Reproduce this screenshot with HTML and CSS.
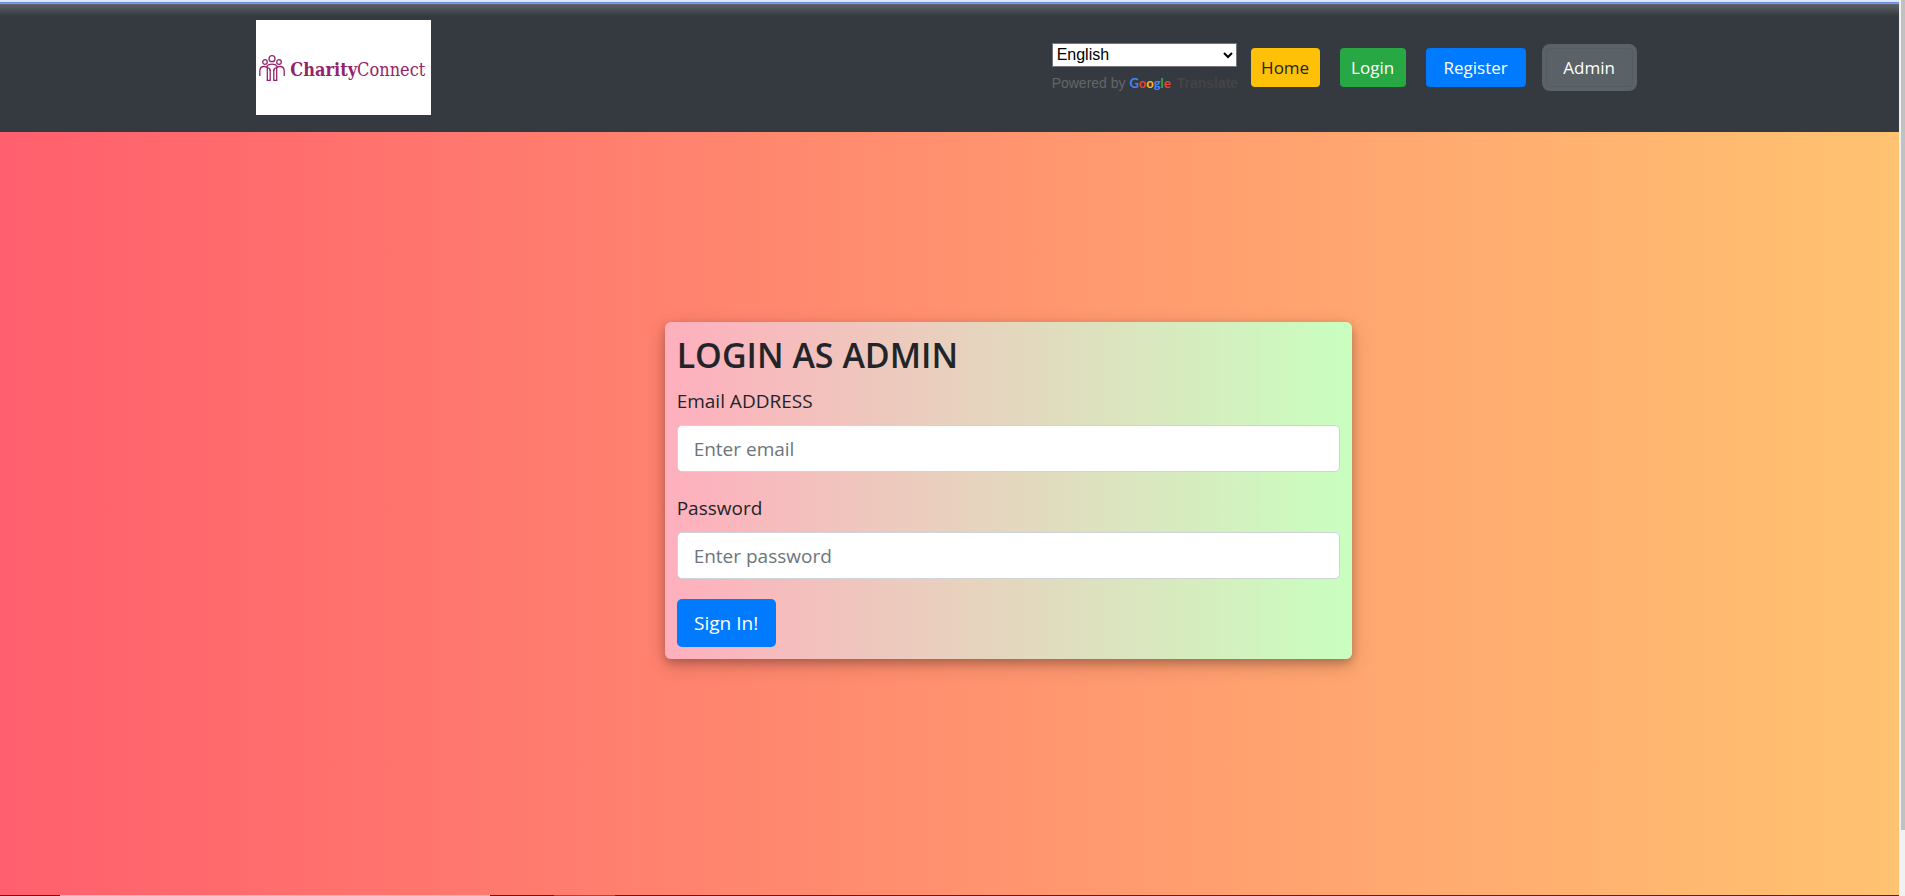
FILE: index.html
```html
<!DOCTYPE html>
<html lang="en">
<head>
<meta charset="utf-8">
<title>CharityConnect – Admin Login</title>
<link rel="stylesheet" href="styles.css">
</head>
<body>
<div class="page">
  <div class="top-strip"></div>
  <header class="navbar">
    <div class="container">
      <a class="brand" href="#">
        <svg class="brand-icon" width="26" height="26" viewBox="0 0 26 26" fill="none" stroke="#93246a" stroke-width="1.3" aria-hidden="true">
          <circle cx="13" cy="3.7" r="3"/>
          <circle cx="6" cy="7" r="2.3"/>
          <circle cx="20" cy="7" r="2.3"/>
          <path d="M.8 21V16Q.8 11.500 5 11.500Q7.500 11.500 8.300 13V25.300H11.200V14.500M25.200 21V16Q25.200 11.500 21 11.500Q18.500 11.500 17.700 13V25.300H14.800V14.500"/>
          <path d="M7.600 12Q9 9.200 13 9.200T18.400 12M8 13Q11.200 12.500 11.200 16M18 13Q14.800 12.500 14.800 16"/>
        </svg>
        <span class="brand-text"><b>Charity</b>Connect</span>
      </a>
      <nav class="actions">
        <div class="translate">
          <select class="language" aria-label="Language"><option>English</option></select>
          <div class="powered">Powered by <span class="google"><span class="g-blue">G</span><span class="g-red">o</span><span class="g-yellow">o</span><span class="g-blue">g</span><span class="g-green">l</span><span class="g-red">e</span></span> <b class="service">Translate</b></div>
        </div>
        <button class="btn btn-home" type="button">Home</button>
        <button class="btn btn-login" type="button">Login</button>
        <button class="btn btn-register" type="button">Register</button>
        <button class="btn btn-admin" type="button">Admin</button>
      </nav>
    </div>
  </header>
  <main class="main">
    <form class="card">
      <h2 class="title">LOGIN AS ADMIN</h2>
      <label class="label" for="email">Email ADDRESS</label>
      <input class="field" id="email" type="email" placeholder="Enter email">
      <label class="label" for="password">Password</label>
      <input class="field" id="password" type="password" placeholder="Enter password">
      <button class="submit" type="button">Sign In!</button>
    </form>
  </main>
  <div class="bottom-strip"></div>
</div>
<div class="scroll-track"><div class="scroll-thumb"></div></div>
</body>
</html>
```
FILE: styles.css
```css
* { box-sizing: border-box; }
body {
  margin: 0;
  display: flex;
  min-height: 100vh;
  font-family: "Open Sans", "Noto Sans", sans-serif;
  color: #212529;
}
.page {
  flex: 1;
  display: flex;
  flex-direction: column;
  background: linear-gradient(to right, #ff5f6d, #ffc371);
}
.top-strip {
  height: 4px;
  background: linear-gradient(#dfe8fb 2px, #6a8bdc 2px, #6a8bdc 3px, #c0908c 3px);
}
.navbar {
  background: linear-gradient(#5f6367, #343a40 12px);
  padding: 16px 0 17px;
}
.container {
  width: 73%;
  margin: 0 auto;
  display: flex;
  justify-content: space-between;
  align-items: center;
}
.brand {
  display: flex;
  align-items: center;
  gap: 5px;
  width: 175px;
  height: 95px;
  padding: 0 3px;
  background: #fff;
  color: #93246a;
  text-decoration: none;
}
.brand-icon { flex: none; }
.brand-text { padding-top: 4px; font: 18px/28px "DejaVu Serif Condensed", "DejaVu Serif", serif; }
.actions { display: flex; align-items: center; gap: 20px; padding-right: 10px; }
.translate { width: 199px; margin-right: -20px; padding-top: 2px; }
.language {
  display: block;
  width: 185px;
  height: 24px;
  border: 1px solid #767676;
  border-radius: 0;
  background: #fff;
  color: #000;
  font: 16px "Liberation Sans", sans-serif;
}
.powered {
  margin-top: 4px;
  color: #666;
  font: 14px/24px "Liberation Sans", sans-serif;
  white-space: nowrap;
}
.google { margin-right: 2px; font-family: Lato, sans-serif; font-size: 13px; font-weight: 700; }
.g-blue { color: #4285f4; }
.g-red { color: #ea4335; }
.g-yellow { color: #fbbc05; }
.g-green { color: #34a853; }
.service { color: #444; }
.btn {
  height: 39px;
  padding: 0 10px;
  border: 0;
  border-radius: 4px;
  color: #fff;
  font: 17px "Open Sans", sans-serif;
}
.btn-home { width: 69px; background: #ffc107; color: #212529; }
.btn-login { width: 66px; background: #28a745; }
.btn-register { width: 100px; background: #007bff; }
.btn-admin { width: 87px; background: #5a6268; border: 1px solid #545b62; box-shadow: 0 0 0 4px #5b6169; }
.main { flex: 1; padding: 190px 0 120px; }
.card {
  width: 687px;
  max-width: 90%;
  margin-left: 35%;
  padding: 12px;
  border-radius: 6px;
  background: linear-gradient(to right, #ffafbd, #c9ffbf);
  box-shadow: 0 4px 8px rgba(0, 0, 0, .2), 0 6px 20px rgba(0, 0, 0, .19);
}
.title { margin: 0 0 8px; font-size: 34px; line-height: 43px; font-weight: 600; }
.label { display: block; margin-bottom: 8px; font-size: 19px; line-height: 32px; }
.field {
  display: block;
  width: 100%;
  height: 47px;
  margin-bottom: 20px;
  padding: 0 16px;
  border: 1px solid #ced4da;
  border-radius: 5px;
  background: #fff;
  font: 19px "Open Sans", sans-serif;
}
.field::placeholder { color: #6c757d; }
.submit {
  display: block;
  width: 99px;
  height: 48px;
  border: 0;
  border-radius: 5px;
  background: #007bff;
  color: #fff;
  font: 19px "Open Sans", sans-serif;
}
.bottom-strip {
  height: 1px;
  background: linear-gradient(to right, #2c2f33 60px, #d0c8c4 60px, #d0c8c4 490px, #2c2f33 490px, #2c2f33 554px, #66625f 554px, #66625f 615px, #2c2f33 615px);
}
.scroll-track { width: 6px; padding-left: 2px; background: #f1f1f1; }
.scroll-thumb { height: 830px; max-height: 93vh; background: #c1c1c1; }
```
